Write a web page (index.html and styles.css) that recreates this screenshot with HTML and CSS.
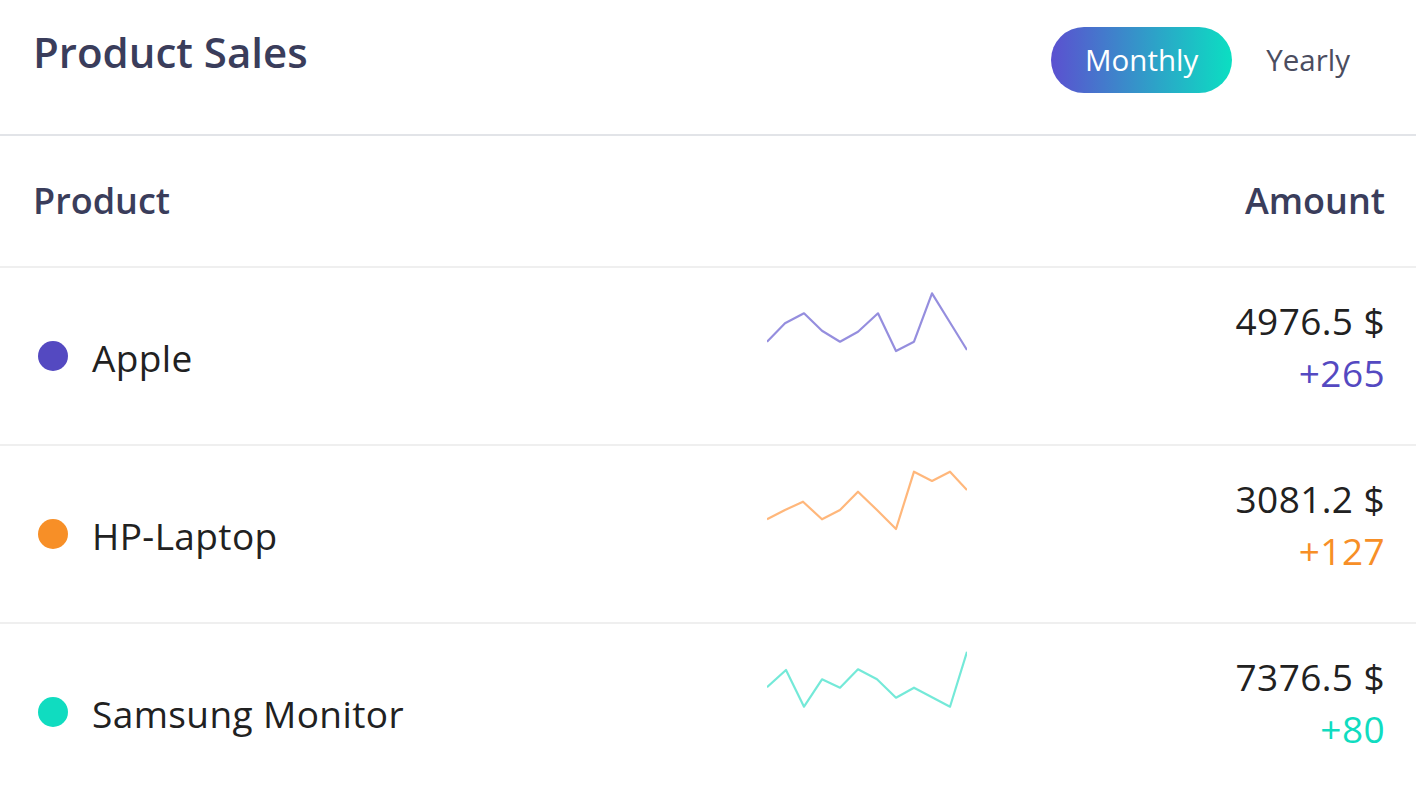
FILE: index.html
```html
<!DOCTYPE html>
<html lang="en">
<head>
<meta charset="utf-8">
<title>Product Sales</title>
<link rel="stylesheet" href="styles.css">
</head>
<body>
<div class="card">
  <div class="card-header">
    <h1 class="title">Product Sales</h1>
    <div class="toggle">
      <button class="tab active">Monthly</button>
      <button class="tab">Yearly</button>
    </div>
  </div>
  <div class="table">
    <div class="thead">
      <div class="th">Product</div>
      <div class="th"></div>
      <div class="th right">Amount</div>
    </div>
    <div class="row">
      <div class="name"><span class="dot dot-apple"></span>Apple</div>
      <div class="spark">
        <svg viewBox="0 0 200 176" width="200" height="176">
          <polyline class="line line-apple" points="0,73.7 18,55.3 37,45.3 55,62.7 73,73.7 91,63.7 111,45.3 129,83 147,73.7 165,25.3 183,54.5 200,82"/>
        </svg>
      </div>
      <div class="amount"><div class="value">4976.5 $</div><div class="delta delta-apple">+265</div></div>
    </div>
    <div class="row">
      <div class="name"><span class="dot dot-hp"></span>HP-Laptop</div>
      <div class="spark">
        <svg viewBox="0 0 200 176" width="200" height="176">
          <polyline class="line line-hp" points="0,73.3 18,64 36,55.7 55,73.3 73,64 91,45.7 110,64 129,83 147,25.7 165,35 183,25.7 200,44"/>
        </svg>
      </div>
      <div class="amount"><div class="value">3081.2 $</div><div class="delta delta-hp">+127</div></div>
    </div>
    <div class="row last">
      <div class="name"><span class="dot dot-samsung"></span>Samsung Monitor</div>
      <div class="spark">
        <svg viewBox="0 0 200 176" width="200" height="176">
          <polyline class="line line-samsung" points="0,63.3 19,46 37,82.7 55,55.3 73,63.7 91,45.3 110,55.3 129,73.7 147,63.7 165,73.3 183,82.7 200,27.7"/>
        </svg>
      </div>
      <div class="amount"><div class="value">7376.5 $</div><div class="delta delta-samsung">+80</div></div>
    </div>
  </div>
</div>
</body>
</html>
```
FILE: styles.css
```css
* { box-sizing: border-box; }
html, body { margin: 0; padding: 0; background: #fff; }
body { font-family: "Open Sans", "Liberation Sans", sans-serif; color: #212121; }

.card { width: 1416px; }

.card-header {
  display: flex;
  justify-content: space-between;
  align-items: flex-start;
  height: 136px;
  padding: 0 32px 0 33px;
  border-bottom: 2px solid #e2e4e8;
}
.title {
  margin: 23px 0 0;
  font-size: 42px;
  line-height: 58px;
  font-weight: 600;
  color: #3a3d5b;
}
.toggle { display: flex; margin-top: 27px; }
.tab {
  height: 66px;
  padding: 0 34px;
  border: 0;
  border-radius: 33px;
  background: transparent;
  font-family: "Open Sans", "Liberation Sans", sans-serif;
  font-size: 29.5px;
  line-height: 66px;
  color: #4b4d5f;
  cursor: pointer;
}
.tab.active {
  color: #fff;
  background: linear-gradient(to right, #5b50d0, #0bdfc2);
}

.table { display: flex; flex-direction: column; }
.thead, .row {
  display: grid;
  grid-template-columns: 734px 200px 1fr;
  padding: 0 31px 0 33px;
}
.thead {
  padding-top: 40px;
  height: 132px;
  border-bottom: 2px solid #efefef;
}
.th {
  font-size: 36px;
  line-height: 50px;
  font-weight: 600;
  color: #3a3d5b;
}
.right { text-align: right; }

.row {
  height: 178px;
  border-bottom: 2px solid #efefef;
  align-items: start;
}
.row.last { border-bottom: 0; }

.name {
  display: flex;
  align-items: center;
  padding-top: 65px;
  font-size: 37px;
  letter-spacing: 0.4px;
  line-height: 50px;
}
.dot {
  width: 30px;
  height: 30px;
  border-radius: 50%;
  margin: 0 24px 4px 5px;
  flex: none;
}
.dot-apple { background: #5449c1; }
.dot-hp { background: #f78f27; }
.dot-samsung { background: #10dcc0; }

.spark { height: 176px; }
.spark svg { display: block; }
.line { fill: none; stroke-width: 2.2; stroke-linejoin: round; opacity: 0.62; }
.line-apple { stroke: #5449c9; }
.line-hp { stroke: #ff8a2a; }
.line-samsung { stroke: #1fdcc0; }

.amount {
  padding-top: 27px;
  text-align: right;
  font-size: 37px;
  letter-spacing: 0.4px;
  line-height: 52px;
}
.value { color: #212121; }
.delta-apple { color: #5449c1; }
.delta-hp { color: #f78f27; }
.delta-samsung { color: #10dcc0; }
```
